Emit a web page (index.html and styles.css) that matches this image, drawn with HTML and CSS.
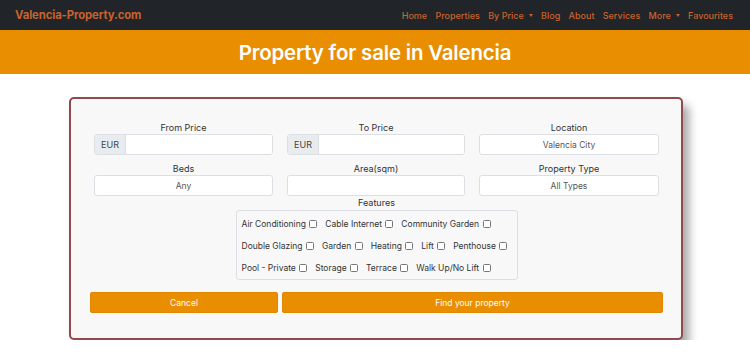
FILE: index.html
```html
<!DOCTYPE html>
<html>
<head>
<meta charset="utf-8">
<link rel="stylesheet" href="styles.css">
</head>
<body>
<nav class="navbar">
  <a class="brand">Valencia-Property.com</a>
  <ul class="nav">
    <li>Home</li>
    <li>Properties</li>
    <li class="dd">By Price</li>
    <li>Blog</li>
    <li>About</li>
    <li>Services</li>
    <li class="dd">More</li>
    <li>Favourites</li>
  </ul>
</nav>
<header class="banner"><h1>Property for sale in Valencia</h1></header>
<main class="wrap">
  <form class="card">
    <div class="grid">
      <div class="field">
        <label>From Price</label>
        <div class="group"><span class="addon">EUR</span><input class="ctl" type="text"></div>
      </div>
      <div class="field">
        <label>To Price</label>
        <div class="group"><span class="addon">EUR</span><input class="ctl" type="text"></div>
      </div>
      <div class="field">
        <label>Location</label>
        <div class="select">Valencia City</div>
      </div>
      <div class="field">
        <label>Beds</label>
        <div class="select">Any</div>
      </div>
      <div class="field">
        <label>Area(sqm)</label>
        <div class="group"><input class="ctl" type="text"></div>
      </div>
      <div class="field">
        <label>Property Type</label>
        <div class="select">All Types</div>
      </div>
    </div>
    <div class="features">
      <label>Features</label>
      <div class="fbox">
        <div class="frow">
          <span class="opt">Air Conditioning <i class="cb"></i></span>
          <span class="opt">Cable Internet <i class="cb"></i></span>
          <span class="opt">Community Garden <i class="cb"></i></span>
        </div>
        <div class="frow">
          <span class="opt">Double Glazing <i class="cb"></i></span>
          <span class="opt">Garden <i class="cb"></i></span>
          <span class="opt">Heating <i class="cb"></i></span>
          <span class="opt">Lift <i class="cb"></i></span>
          <span class="opt">Penthouse <i class="cb"></i></span>
        </div>
        <div class="frow">
          <span class="opt">Pool - Private <i class="cb"></i></span>
          <span class="opt">Storage <i class="cb"></i></span>
          <span class="opt">Terrace <i class="cb"></i></span>
          <span class="opt">Walk Up/No Lift <i class="cb"></i></span>
        </div>
      </div>
    </div>
    <div class="buttons">
      <button type="button" class="btn cancel">Cancel</button>
      <button type="button" class="btn find">Find your property</button>
    </div>
  </form>
</main>
</body>
</html>
```
FILE: styles.css
```css
* { box-sizing: border-box; }
body {
  margin: 0;
  font-family: Inter, "Liberation Sans", sans-serif;
  background: #fff;
  color: #333;
}
.navbar {
  height: 30px;
  background: #212529;
  display: flex;
  align-items: center;
  justify-content: space-between;
  padding: 0 17px 0 15px;
}
.brand {
  color: #c6622f;
  font-weight: 700;
  font-size: 11.3px;
  letter-spacing: -0.1px;
}
.nav {
  list-style: none;
  margin: 0;
  padding: 0;
  display: flex;
  gap: 8.3px;
  font-size: 9px;
  font-weight: 500;
  color: #c6622f;
}
.nav .dd::after {
  content: "";
  display: inline-block;
  margin-left: 5px;
  vertical-align: 2px;
  border-top: 3px solid #c6622f;
  border-left: 2.5px solid transparent;
  border-right: 2.5px solid transparent;
}
.banner {
  height: 44px;
  background: #e88e00;
  display: flex;
  align-items: center;
  justify-content: center;
}
.banner h1 {
  margin: 0;
  color: #fff;
  font-size: 20.5px;
  font-weight: 600;
  letter-spacing: -0.2px;
}
.wrap {
  padding: 23px 67px 0 69px;
}
.card {
  background: #f8f8f8;
  border: 2px solid #8e4a4c;
  border-radius: 5px;
  box-shadow: 6px 8px 10px rgba(0,0,0,0.35);
  padding: 23px 22px 0 23px;
  height: 243px;
}
.grid {
  display: grid;
  grid-template-columns: 179px 178px 180px;
  column-gap: 14px;
  row-gap: 8px;
}
.field label, .features > label {
  display: block;
  text-align: center;
  font-size: 9px;
  color: #333;
  line-height: 12px;
}
.group {
  display: flex;
  height: 21px;
  border: 1px solid #dcdfe3;
  border-radius: 3px;
  background: #fff;
  overflow: hidden;
}
.addon {
  width: 31px;
  background: #e9ecef;
  border-right: 1px solid #dcdfe3;
  font-size: 9px;
  color: #444;
  display: flex;
  align-items: center;
  justify-content: center;
}
.ctl {
  flex: 1;
  border: 0;
  background: #fff;
  min-width: 0;
}
.select {
  height: 21px;
  border: 1px solid #dcdfe3;
  border-radius: 3px;
  background: #fff;
  font-size: 8.5px;
  color: #555;
  display: flex;
  align-items: center;
  justify-content: center;
}
.features {
  margin-top: 1px;
  display: flex;
  flex-direction: column;
  align-items: center;
}
.features > label { margin-bottom: 1px; }
.fbox {
  width: 282px;
  height: 70px;
  border: 1px solid #dcdfe3;
  border-radius: 3px;
  padding: 7px 5px 0 5px;
  display: flex;
  flex-direction: column;
  gap: 9px;
}
.frow {
  display: flex;
  gap: 8px;
  font-size: 8.5px;
  color: #333;
  line-height: 13px;
}
.cb {
  display: inline-block;
  width: 8px;
  height: 8px;
  border: 1px solid #777;
  border-radius: 1.5px;
  background: #fff;
  vertical-align: -1px;
  margin-left: 1px;
}
.buttons {
  display: flex;
  gap: 4px;
  margin-top: 12px;
  margin-left: -4px;
  margin-right: -4px;
}
.btn {
  flex-shrink: 0;
  height: 21px;
  border: 1px solid #e08800;
  border-radius: 2px;
  background: #e88e00;
  color: #fff;
  font-family: Inter, "Liberation Sans", sans-serif;
  font-size: 8.5px;
  padding: 0;
}
.cancel { width: 188px; }
.find { width: 381px; }
```
